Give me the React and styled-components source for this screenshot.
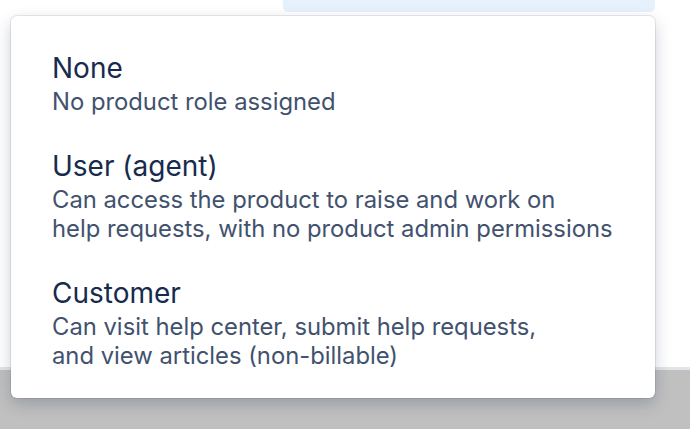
import React from 'react';
import styled, { createGlobalStyle } from 'styled-components';

const roles = [
	{ name: 'None', lines: ['No product role assigned'] },
	{
		name: 'User (agent)',
		lines: [
			'Can access the product to raise and work on',
			'help requests, with no product admin permissions',
		],
	},
	{
		name: 'Customer',
		lines: [
			'Can visit help center, submit help requests,',
			'and view articles (non-billable)',
		],
	},
];

const App = () => {
	return (
		<Page>
			<GlobalStyle />
			<Content>
				<SelectedField />
			</Content>
			<Footer />
			<Menu role="listbox">
				{roles.map((role) => (
					<Option key={role.name} role="option">
						<OptionTitle>{role.name}</OptionTitle>
						{role.lines.map((line) => (
							<OptionLine key={line}>{line}</OptionLine>
						))}
					</Option>
				))}
			</Menu>
		</Page>
	);
};
export default App;

const GlobalStyle = createGlobalStyle`
	html, body {
		margin: 0;
		padding: 0;
		background: #ffffff;
	}
	body {
		font-family: Inter, "Noto Sans", "Liberation Sans", sans-serif;
		-webkit-font-smoothing: antialiased;
	}
`;

const Page = styled.div`
	position: relative;
	width: 690px;
	height: 429px;
	overflow: hidden;
	display: flex;
	flex-direction: column;
`;

const Content = styled.div`
	height: 367px;
	background: #ffffff;
`;

const SelectedField = styled.div`
	margin-left: 283px;
	width: 372px;
	height: 12px;
	background: #e7f1fd;
	border-radius: 0 0 5px 5px;
`;

const Footer = styled.div`
	flex: 1;
	border-top: 3px solid #e2e4e9;
	background: #c0c0c0;
`;

/* dropdown menu floats over the page */
const Menu = styled.div`
	position: absolute;
	top: 16px;
	left: 11px;
	width: 644px;
	height: 382px;
	box-sizing: border-box;
	padding: 36px 0 0;
	background: #ffffff;
	border-radius: 6px;
	box-shadow: 0 0 0 1px rgba(9, 30, 66, 0.09),
		0 6px 16px rgba(9, 30, 66, 0.22);
	display: flex;
	flex-direction: column;
	gap: 34px;
`;

const Option = styled.div`
	padding: 0 41px;
	display: flex;
	flex-direction: column;
`;

const OptionTitle = styled.div`
	font-size: 28px;
	line-height: 32px;
	color: #172b4d;
	margin-bottom: 3px;
	white-space: nowrap;
`;

const OptionLine = styled.div`
	font-size: 23.8px;
	line-height: 29px;
	color: #42526e;
	white-space: nowrap;
`;
